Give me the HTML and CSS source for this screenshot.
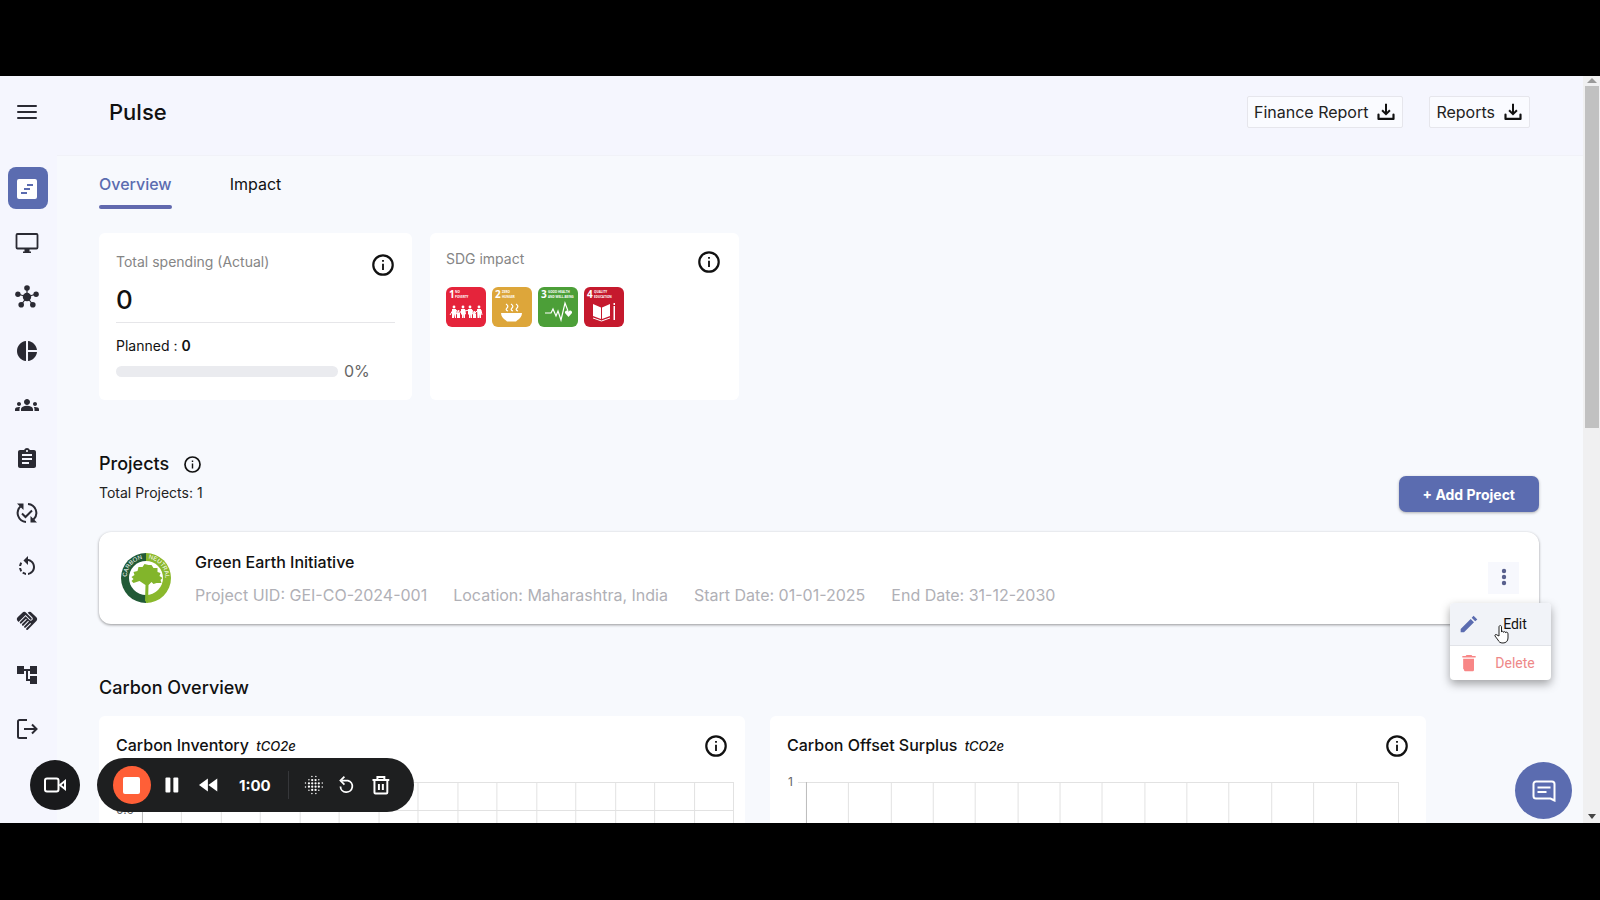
FILE: index.html
```html
<!DOCTYPE html>
<html lang="en">
<head>
    <meta charset="UTF-8">
    <meta name="viewport" content="width=device-width, initial-scale=1.0">
    <title>Pulse</title>
    <link rel="stylesheet" href="styles.css">
</head>
<body>

    <!-- shared icons -->
    <svg class="sprite" aria-hidden="true">
        <symbol id="icon-info" viewBox="0 0 24 24">
            <circle cx="12" cy="12" r="10.6" fill="none" stroke="currentColor" stroke-width="2.4"/>
            <path d="M11 10.5h2v7h-2zM11 6.5h2v2h-2z" fill="currentColor"/>
        </symbol>
        <symbol id="icon-download" viewBox="0 0 24 24">
            <path d="M21 15v5.300H3V15" fill="none" stroke="currentColor" stroke-width="2.6" stroke-linejoin="round" stroke-linecap="round"/>
            <path d="M12 2v12M7.300 10l4.700 4.600 4.700-4.600" fill="none" stroke="currentColor" stroke-width="2.4"/>
        </symbol>
    </svg>

    <div class="screen">
        <nav class="sidebar">
            <button class="menu-toggle" aria-label="Menu">
                <svg viewBox="0 0 20 16"><path d="M1 2h18M1 8h18M1 14h18" stroke="currentColor" stroke-width="2" stroke-linecap="round"/></svg>
            </button>
            <a href="#" class="nav-item active" aria-label="Pulse">
                <svg viewBox="0 0 24 24"><rect x="2" y="2" width="20" height="20" rx="2" fill="#fff"/><path d="M12 8h6M9 12h6M6 16h6" stroke="#5b6cb0" stroke-width="2"/></svg>
            </a>
            <a href="#" class="nav-item" aria-label="Monitor">
                <svg viewBox="0 0 24 24"><rect x="1.500" y="3" width="21" height="14.500" rx="1" fill="none" stroke="currentColor" stroke-width="1.800"/><path d="M9.500 17.500h5v3h1.500V22H8v-1.500h1.500z" fill="currentColor"/></svg>
            </a>
            <a href="#" class="nav-item" aria-label="Network">
                <svg viewBox="0 0 24 24" fill="currentColor"><path d="M12 12V3M12 12L3 9M12 12l9-3M12 12l-6 8M12 12l6 8" stroke="currentColor" stroke-width="1.200"/><circle cx="12" cy="12" r="4.200"/><circle cx="12" cy="3" r="2.800"/><circle cx="2.900" cy="9.200" r="2.700"/><circle cx="21.100" cy="9.200" r="2.700"/><circle cx="6.200" cy="19.800" r="2.800"/><circle cx="17.800" cy="19.800" r="2.800"/></svg>
            </a>
            <a href="#" class="nav-item" aria-label="Charts">
                <svg viewBox="0 0 24 24" fill="currentColor"><path d="M11 2v20c-5.070-.5-9-4.790-9-10s3.930-9.500 9-10zm2.030 0v8.990H22c-.47-4.740-4.240-8.520-8.970-8.990zm0 11.010V22c4.740-.47 8.500-4.250 8.970-8.990h-8.970z"/></svg>
            </a>
            <a href="#" class="nav-item" aria-label="Groups">
                <svg viewBox="0 0 24 24" fill="currentColor"><path d="M12 12.750c1.630 0 3.070.39 4.240.9 1.080.48 1.760 1.560 1.760 2.730V18H6v-1.610c0-1.180.68-2.260 1.760-2.730 1.170-.52 2.610-.91 4.240-.91zM4 13c1.100 0 2-.9 2-2s-.9-2-2-2-2 .9-2 2 .9 2 2 2zm1.130 1.100c-.37-.06-.74-.1-1.130-.1-.99 0-1.930.21-2.780.58A2.010 2.010 0 0 0 0 16.430V18h4.500v-1.610c0-.83.23-1.610.63-2.290zM20 13c1.100 0 2-.9 2-2s-.9-2-2-2-2 .9-2 2 .9 2 2 2zm4 3.430c0-.81-.48-1.530-1.220-1.850A6.950 6.950 0 0 0 20 14c-.39 0-.76.04-1.130.1.4.68.63 1.460.63 2.290V18H24v-1.570zM12 6c1.660 0 3 1.340 3 3s-1.340 3-3 3-3-1.340-3-3 1.340-3 3-3z"/></svg>
            </a>
            <a href="#" class="nav-item" aria-label="Assignments">
                <svg viewBox="0 0 24 24" fill="currentColor"><path d="M19 3h-4.180C14.400 1.840 13.300 1 12 1c-1.300 0-2.400.84-2.820 2H5c-1.100 0-2 .9-2 2v14c0 1.100.9 2 2 2h14c1.100 0 2-.9 2-2V5c0-1.100-.9-2-2-2zm-7 0c.55 0 1 .45 1 1s-.45 1-1 1-1-.45-1-1 .45-1 1-1zm2 14H7v-2h7v2zm3-4H7v-2h10v2zm0-4H7V7h10v2z"/></svg>
            </a>
            <a href="#" class="nav-item" aria-label="Changes">
                <svg viewBox="0 0 24 24" fill="none" stroke="currentColor" stroke-width="2"><path d="M11 21A9 9 0 0 1 5.500 5.500M13 3a9 9 0 0 1 5.500 15.500"/><path d="M7 12.500l3.500 3.500 6.500-6.500"/><path d="M2 2.500h6.500V9zM22 21.500h-6.500V15z" fill="currentColor" stroke="none"/></svg>
            </a>
            <a href="#" class="nav-item" aria-label="History">
                <svg viewBox="0 0 24 24" fill="currentColor"><path d="M7.110 8.530L5.700 7.110C4.800 8.270 4.240 9.610 4.070 11h2.020c.14-.87.49-1.720 1.020-2.470zM6.090 13H4.070c.17 1.390.72 2.730 1.620 3.890l1.410-1.420c-.52-.75-.87-1.590-1.010-2.470zm1.010 5.320c1.160.9 2.510 1.440 3.900 1.610V17.900c-.87-.15-1.710-.49-2.460-1.030L7.100 18.320zM13 4.070V1L8.450 5.550 13 10V6.090c2.840.48 5 2.940 5 5.910s-2.160 5.430-5 5.910v2.020c3.950-.49 7-3.850 7-7.930s-3.050-7.440-7-7.930z"/></svg>
            </a>
            <a href="#" class="nav-item" aria-label="Partners">
                <svg viewBox="0 0 24 24" fill="currentColor"><path d="M16.480 10.410c-.39.39-1.040.39-1.430 0l-4.470-4.460-7.050 7.040-.66-.63a3 3 0 0 1 0-4.240l4.240-4.240a3 3 0 0 1 4.240 0L16.480 9c.39.39.39 1.020 0 1.410zm.7-2.120c.78.78.78 2.050 0 2.830-1.270 1.270-2.610.22-2.830 0l-3.760-3.760-5.570 5.570c-.39.39-.39 1.020 0 1.410s1.020.39 1.420 0l4.620-4.620.71.71-4.620 4.620c-.39.39-.39 1.020 0 1.410s1.020.39 1.420 0l4.620-4.620.71.71-4.620 4.620c-.39.39-.39 1.020 0 1.410s1.020.39 1.410 0l4.620-4.620.71.71-4.620 4.620c-.39.39-.39 1.020 0 1.410s1.020.39 1.410 0l8.320-8.340a3 3 0 0 0 0-4.240l-4.240-4.240a3 3 0 0 0-4.180-.06l4.470 4.470z"/></svg>
            </a>
            <a href="#" class="nav-item" aria-label="Structure">
                <svg viewBox="0 0 24 24" fill="currentColor"><path d="M22 11V3h-7v3H9V3H2v8h7V8h2v10h4v3h7v-8h-7v3h-2V8h2v3z"/></svg>
            </a>
            <a href="#" class="nav-item" aria-label="Log out">
                <svg viewBox="0 0 24 24" fill="none" stroke="currentColor" stroke-width="2"><path d="M12 3H4.500A1.500 1.500 0 0 0 3 4.500v15A1.500 1.500 0 0 0 4.500 21H12M9 12h12M17 7.500l4.500 4.500-4.500 4.500"/></svg>
            </a>
        </nav>

        <div class="page">
            <header class="topbar">
                <h1>Pulse</h1>
                <div class="topbar-actions">
                    <button class="report-btn">Finance Report <svg><use href="#icon-download"/></svg></button>
                    <button class="report-btn">Reports <svg><use href="#icon-download"/></svg></button>
                </div>
            </header>

            <main class="content">
                <div class="tabs">
                    <a href="#" class="tab selected">Overview</a>
                    <a href="#" class="tab">Impact</a>
                </div>

                <div class="stats">
                    <section class="card spending">
                        <div class="card-head">
                            <span class="card-label">Total spending (Actual)</span>
                            <svg class="info"><use href="#icon-info"/></svg>
                        </div>
                        <div class="amount">0</div>
                        <div class="planned">Planned : <b>0</b></div>
                        <div class="progress-row">
                            <div class="progress"></div>
                            <span>0%</span>
                        </div>
                    </section>

                    <section class="card sdg">
                        <div class="card-head">
                            <span class="card-label">SDG impact</span>
                            <svg class="info"><use href="#icon-info"/></svg>
                        </div>
                        <div class="goals">
                            <svg viewBox="0 0 40 40" fill="#fff">
                                <rect width="40" height="40" rx="6" fill="#e5243b"/>
                                <text x="3" y="11" class="goal-num">1</text>
                                <text x="9" y="6" class="goal-text">NO</text><text x="9" y="11" class="goal-text">POVERTY</text>
                                <circle cx="8" cy="20" r="1.400"/><circle cx="17" cy="20" r="1.400"/><circle cx="24" cy="20" r="1.400"/><circle cx="33" cy="20" r="1.400"/>
                                <circle cx="12.500" cy="24" r="1"/><circle cx="28.500" cy="25" r="1"/>
                                <path d="M6 22h4l1 5-1 .5V31H9v-4l-1 4H6zM15 22h4l1 5-1 .5V31h-1.500v-4L17 31h-1v-3l-1-1zM22 22h4l1 5-1 .5V31h-1.500v-4L24 31h-1v-3l-1-1zM31 22h4v9h-1.500v-4L33 31h-1.500zM11 25.500h3V31h-3zM27 26.500h3V31h-3z"/>
                                <path d="M4 28l3-5M10 23l3 4 3-4M19 24l4-1M26 23l2 4 4-4M35 23l1 5" stroke="#fff" stroke-width="1" fill="none"/>
                            </svg>
                            <svg viewBox="0 0 40 40" fill="#fff">
                                <rect width="40" height="40" rx="6" fill="#dda63a"/>
                                <text x="3" y="11" class="goal-num">2</text>
                                <text x="10" y="6" class="goal-text">ZERO</text><text x="10" y="11" class="goal-text">HUNGER</text>
                                <path d="M9 26h21c0 3-2 6-5 7.500l-1 1h-9l-1-1C11 32 9 29 9 26z"/>
                                <path d="M14 17q3 2 1 4t1 3M19 17q3 2 1 4t1 3M24 17q3 2 1 4t1 3" fill="none" stroke="#fff" stroke-width="1.200"/>
                            </svg>
                            <svg viewBox="0 0 40 40" fill="#fff">
                                <rect width="40" height="40" rx="6" fill="#4c9f38"/>
                                <text x="3" y="11" class="goal-num">3</text>
                                <text x="10" y="6" class="goal-text">GOOD HEALTH</text><text x="10" y="11" class="goal-text">AND WELL-BEING</text>
                                <path d="M7 26h6l2-4 3 7 2-5 3 9 4-17 3 8" fill="none" stroke="#fff" stroke-width="1.200"/>
                                <path d="M30.500 30l-3.500-4c-.5-2 2-3.500 3.500-1.500 1.500-2 4-.5 3.500 1.500z"/>
                            </svg>
                            <svg viewBox="0 0 40 40" fill="#fff">
                                <rect width="40" height="40" rx="6" fill="#c5192d"/>
                                <text x="3" y="11" class="goal-num">4</text>
                                <text x="10" y="6" class="goal-text">QUALITY</text><text x="10" y="11" class="goal-text">EDUCATION</text>
                                <path d="M9 17l8 3.500V32l-8-3zM18 20.500l8-3.500v12l-8 3z"/>
                                <path d="M9 31l8.500 3 8.500-3" fill="none" stroke="#fff" stroke-width="1"/>
                                <path d="M29.500 19h1.500v14h-1.500zM29.500 16h1.500v2h-1.500z"/>
                            </svg>
                        </div>
                    </section>
                </div>

                <div class="projects-head">
                    <div>
                        <h2>Projects <svg class="info-small"><use href="#icon-info"/></svg></h2>
                        <p>Total Projects: 1</p>
                    </div>
                    <button class="add-btn">+ Add Project</button>
                </div>

                <article class="project">
                    <svg class="project-logo" viewBox="0 0 50 50">
                        <path d="M25 0a25 25 0 0 0 0 50z" fill="#215a36"/>
                        <path d="M25 0a25 25 0 0 1 0 50z" fill="#8ab82c"/>
                        <circle cx="25" cy="25" r="17" fill="#fff"/>
                        <path d="M24 48l.5-16-6-4-6 2-2-2 2-2-2-2 3-2-1-3 4-1 1-4 4 0 2-3 4 1 3 0 2 3 4 0 0 4 3 1-1 3 3 2-2 2 1 3-5 0-3 1-2-2-3 3-.5 18z" fill="#82b52b"/>
                        <path id="logo-arc" d="M5.500 25a19.500 19.500 0 0 1 39 0" fill="none"/>
                        <text class="logo-text"><textPath href="#logo-arc" startOffset="1">CARBON</textPath></text>
                        <text class="logo-text"><textPath href="#logo-arc" startOffset="33">NEUTRAL</textPath></text>
                    </svg>
                    <div class="project-info">
                        <h3>Green Earth Initiative</h3>
                        <div class="project-meta">
                            <span>Project UID: GEI-CO-2024-001</span>
                            <span>Location: Maharashtra, India</span>
                            <span>Start Date: 01-01-2025</span>
                            <span>End Date: 31-12-2030</span>
                        </div>
                    </div>
                    <button class="more-btn" aria-label="More">
                        <svg viewBox="0 0 6 20" fill="currentColor"><circle cx="3" cy="4" r="2.200"/><circle cx="3" cy="10" r="2.200"/><circle cx="3" cy="16" r="2.200"/></svg>
                    </button>
                    <div class="menu">
                        <button class="menu-edit">
                            <svg viewBox="0 0 24 24" fill="#5b6cb0"><path d="M2 18v4h4L18 10l-4-4zM22 6.500L17.500 2l-2.300 2.600 4.200 4.200z"/></svg>
                            <span>Edit</span>
                        </button>
                        <button class="menu-delete">
                            <svg viewBox="0 0 24 24" fill="#f88686"><path d="M6 20c0 1.100.9 2 2 2h8c1.100 0 2-.9 2-2V7H5v12zM20 3.500h-4l-1-1H9l-1 1H4v2h16z"/></svg>
                            <span>Delete</span>
                        </button>
                        <svg class="pointer" viewBox="0 0 16 20"><path d="M5 12V3c0-2 2.500-2 2.500 0v5c0-1 2-1 2 .3 0-1 2.200-1 2.200.5 0-1 2.300-1 2.300 1V14c0 3-2 5-5 5-3 0-4-1-5-3l-3-4c-.5-1.500 1-2 2-1z" fill="#fff" stroke="#222" stroke-width="1"/></svg>
                    </div>
                </article>

                <h2 class="carbon-title">Carbon Overview</h2>
                <div class="charts">
                    <section class="card chart">
                        <div class="card-head">
                            <h3>Carbon Inventory <em>tCO2e</em></h3>
                            <svg class="info"><use href="#icon-info"/></svg>
                        </div>
                        <div class="plot plot-left">
                            <svg viewBox="0 0 619 60" preserveAspectRatio="none" stroke="#e2e2e2">
                                <path d="M18 .5h601M18 28.500h601"/>
                                <path d="M65.500 0v60M105.500 0v60M144.500 0v60M184.500 0v60M223.500 0v60M263.500 0v60M302.500 0v60M342.500 0v60M381.500 0v60M421.500 0v60M460.500 0v60M500.500 0v60M539.500 0v60M579.500 0v60M618.500 0v60"/>
                                <path d="M26.500 0v60" stroke="#bbb"/>
                            </svg>
                            <span class="tick tick-mid">0.9</span>
                        </div>
                    </section>
                    <section class="card chart">
                        <div class="card-head">
                            <h3>Carbon Offset Surplus <em>tCO2e</em></h3>
                            <svg class="info"><use href="#icon-info"/></svg>
                        </div>
                        <div class="plot plot-right">
                            <svg viewBox="0 0 613 60" preserveAspectRatio="none" stroke="#e2e2e2">
                                <path d="M11 .5h602"/>
                                <path d="M61.500 0v60M104.500 0v60M146.500 0v60M188.500 0v60M231.500 0v60M273.500 0v60M315.500 0v60M358.500 0v60M400.500 0v60M442.500 0v60M485.500 0v60M527.500 0v60M570.500 0v60M612.500 0v60"/>
                                <path d="M19.500 0v60" stroke="#bbb"/>
                            </svg>
                            <span class="tick tick-top">1</span>
                        </div>
                    </section>
                </div>
            </main>
        </div>

        <div class="scrollbar">
            <svg viewBox="0 0 10 6"><path d="M0 6l5-5 5 5z" fill="#9a9a9a"/></svg>
            <div class="thumb"></div>
            <svg viewBox="0 0 10 6"><path d="M1 0h8L5 5z" fill="#444"/></svg>
        </div>

        <!-- recorder controls -->
        <div class="recorder">
            <button class="camera" aria-label="Camera">
                <svg viewBox="0 0 24 20" fill="none" stroke="#fff" stroke-width="2"><rect x="2" y="3.500" width="13.500" height="13" rx="2"/><path d="M17 10l5-4v8z"/></svg>
            </button>
            <div class="recorder-bar">
                <button class="stop" aria-label="Stop"><i></i></button>
                <button class="rec-btn pause" aria-label="Pause"><svg viewBox="0 0 20 20" fill="#fff"><rect x="3.500" y="2.500" width="5" height="15" rx="1"/><rect x="11.500" y="2.500" width="5" height="15" rx="1"/></svg></button>
                <button class="rec-btn rewind" aria-label="Rewind"><svg viewBox="0 0 20 20" fill="#fff"><path d="M10 3.500v13L1 10zM19.500 3.500v13L10.500 10z"/></svg></button>
                <span class="time">1:00</span>
                <span class="divider"></span>
                <button class="rec-btn" aria-label="Effects"><svg viewBox="0 0 20 20" fill="none" stroke="#fff" stroke-linecap="round"><path d="M8 1.500v0M12 1.500v0M8 18.500v0M12 18.500v0M1.500 8v0M1.500 12v0M18.500 8v0M18.500 12v0M5 4.800v0M15 4.800v0M5 15.200v0M15 15.200v0" stroke-width="1.500"/><path d="M8.300 5v0M11.700 5v0M5 8.300v0M8.300 8.300v0M11.700 8.300v0M15 8.300v0M5 11.700v0M8.300 11.700v0M11.700 11.700v0M15 11.700v0M8.300 15v0M11.700 15v0" stroke-width="2.300"/></svg></button>
                <button class="rec-btn" aria-label="Restart"><svg viewBox="0 0 20 20" fill="none" stroke="#fff" stroke-width="1.800"><path d="M5 5.500h6a6 6 0 1 1-7.500 6"/><path d="M7.500 1.500l-4 4 4 4"/></svg></button>
                <button class="rec-btn" aria-label="Discard"><svg viewBox="0 0 20 20" fill="none" stroke="#fff" stroke-width="2"><path d="M1.500 5h17M6.500 5V2h7v3M3.500 5v12.500c0 .6.400 1 1 1h11c.6 0 1-.4 1-1V5M8 9v6M12 9v6"/></svg></button>
            </div>
        </div>

        <button class="chat" aria-label="Chat">
            <svg viewBox="0 0 24 24" fill="none" stroke="#fff" stroke-width="2"><path d="M22.500 21.500l-4-2H4a2.500 2.500 0 0 1-2.500-2.500V5A2.500 2.500 0 0 1 4 2.500h16A2.500 2.500 0 0 1 22.500 5z"/><path d="M5.500 8.500h13M5.500 13h9"/></svg>
        </button>
    </div>

</body>
</html>
```
FILE: styles.css
```css
* {
    box-sizing: border-box;
}
body {
    margin: 0;
    height: 100vh;
    padding: 76px 0 77px;
    background-color: #000;
    font-family: "Inter", "Liberation Sans", sans-serif;
    color: #111;
    overflow: hidden;
}
h1, h2, h3, p {
    margin: 0;
    font-weight: 500;
}
button {
    font-family: inherit;
    border: none;
    padding: 0;
    cursor: pointer;
}
a {
    color: inherit;
    text-decoration: none;
}
.sprite {
    display: none;
}
.screen {
    position: relative;
    display: flex;
    height: 100%;
    overflow: hidden;
    background-color: #f7f9fd;
}

/* sidebar */
.sidebar {
    width: 57px;
    flex: none;
    display: flex;
    flex-direction: column;
    gap: 12px;
    padding: 20px 9px 0 8px;
    background-color: #f5f6fe;
    color: #2a2a33;
}
.menu-toggle {
    height: 32px;
    margin-bottom: 27px;
    padding-right: 2px;
    background: none;
    color: inherit;
}
.menu-toggle svg {
    width: 20px;
    height: 16px;
    display: block;
    margin: 0 auto;
}
.nav-item {
    flex: none;
    height: 42px;
    padding: 1px 2px 0 0;
    display: flex;
    align-items: center;
    justify-content: center;
    border-radius: 8px;
}
.nav-item svg {
    width: 24px;
    height: 24px;
}
.nav-item.active {
    background-color: #5b6cb0;
}

/* top bar */
.page {
    flex: 1;
    min-width: 0;
}
.topbar {
    display: flex;
    align-items: center;
    justify-content: space-between;
    height: 80px;
    padding: 0 53px 8px 52px;
    background-color: #f5f6fe;
    border-bottom: 1px solid #f1f2f8;
}
.topbar h1 {
    font-size: 22px;
    line-height: 28px;
}
.topbar-actions {
    display: flex;
    gap: 26px;
}
.report-btn {
    display: flex;
    align-items: center;
    gap: 8px;
    height: 32px;
    padding: 0 6px;
    border: 1px solid #e6e6ec;
    border-radius: 2px;
    background-color: #fafbff;
    color: #222;
    font-size: 16px;
}
.report-btn svg {
    width: 20px;
    height: 20px;
    color: #111;
}

/* content */
.content {
    padding: 16px 44px 0 42px;
}
.tabs {
    display: flex;
    gap: 58px;
}
.tab {
    font-size: 16px;
    line-height: 24px;
    padding-bottom: 9px;
    position: relative;
    border-bottom: 4px solid transparent;
}
.tab.selected {
    color: #5b6cb0;
    font-weight: 500;
}
.tab.selected::after {
    content: "";
    position: absolute;
    left: 0;
    right: 0;
    bottom: -4px;
    height: 4px;
    border-radius: 2px;
    background-color: #6169ae;
}
.card {
    background-color: #fff;
    border-radius: 6px;
}
.card-head {
    display: flex;
    justify-content: space-between;
    align-items: flex-start;
}
.card-label {
    font-size: 14px;
    line-height: 20px;
    color: #858585;
}
.info {
    width: 22px;
    height: 22px;
}
.stats {
    display: flex;
    gap: 18px;
    margin-top: 24px;
    height: 167px;
}
.spending {
    width: 313px;
    padding: 19px 17px 0;
}
.spending .card-head {
    height: 32px;
    padding-right: 1px;
}
.spending .info {
    margin-top: 2px;
}
.amount {
    font-size: 26px;
    line-height: 32px;
    height: 39px;
    font-weight: 500;
    border-bottom: 1px solid #e6e6e9;
}
.planned {
    margin-top: 13px;
    font-size: 14px;
    line-height: 20px;
}
.planned b {
    font-weight: 600;
}
.progress-row {
    display: flex;
    align-items: center;
    gap: 6px;
    margin-top: 4px;
    font-size: 16px;
    line-height: 22px;
    color: #666;
}
.progress {
    width: 222px;
    height: 11px;
    border-radius: 6px;
    background-color: #eaebef;
}
.sdg {
    width: 309px;
    padding: 16px 19px 0 16px;
}
.sdg .info {
    margin-top: 2px;
}
.goals {
    display: flex;
    gap: 6px;
    margin-top: 14px;
}
.goals svg {
    width: 40px;
    height: 40px;
}
.goal-num {
    font: bold 10px "Open Sans", sans-serif;
}
.goal-text {
    font: bold 3px "Open Sans", sans-serif;
}

/* projects */
.projects-head {
    display: flex;
    justify-content: space-between;
    align-items: flex-end;
    height: 62px;
    margin-top: 50px;
}
.projects-head > div {
    height: 62px;
}
h2 {
    display: flex;
    align-items: center;
    gap: 15px;
    font-size: 18px;
    line-height: 28px;
}
.info-small {
    width: 17px;
    height: 17px;
}
.projects-head p {
    margin-top: 5px;
    font-size: 14px;
    line-height: 20px;
    font-weight: 400;
    color: #222;
}
.add-btn {
    height: 36px;
    padding: 0 24px;
    border-radius: 7px;
    background-color: #5b6cb0;
    box-shadow: 0 1px 3px rgba(0, 0, 0, 0.3);
    color: #fff;
    font-size: 14px;
    font-weight: 700;
}
.project {
    position: relative;
    display: flex;
    align-items: center;
    height: 92px;
    margin-top: 20px;
    padding: 0 20px;
    border-radius: 12px;
    background-color: #fff;
    box-shadow: 0 1px 3px rgba(0, 0, 0, 0.4);
}
.project-logo {
    width: 50px;
    height: 50px;
    margin: 0 24px 0 2px;
}
.logo-text {
    font: 6px "Liberation Sans", sans-serif;
    fill: #fff;
}
.project-info {
    flex: 1;
}
.project-info h3,
.chart h3 {
    font-size: 16px;
    line-height: 24px;
}
.project-meta {
    display: flex;
    gap: 26px;
    margin-top: 9px;
    font-size: 16px;
    line-height: 24px;
    color: #b0b0b6;
}
.more-btn {
    width: 31px;
    height: 32px;
    background-color: #f7f8fd;
    color: #59608d;
}
.more-btn svg {
    width: 6px;
    height: 20px;
}
.menu {
    position: absolute;
    top: 71px;
    right: -12px;
    z-index: 2;
    width: 101px;
    border-radius: 4px;
    background-color: #fff;
    box-shadow: 0 4px 10px rgba(0, 0, 0, 0.35);
}
.menu button {
    display: flex;
    align-items: center;
    width: 100%;
    padding: 0 8px 0 9px;
    background: none;
    font-family: "Roboto", sans-serif;
    font-size: 14px;
}
.menu svg {
    width: 20px;
    height: 20px;
}
.menu span {
    flex: 1;
    text-align: center;
    padding-left: 8px;
}
.menu .menu-edit {
    height: 43px;
    border-bottom: 1px solid #e1e3e8;
    border-radius: 4px 4px 0 0;
    background-color: #f1f3f8;
    color: #111;
}
.menu .menu-delete {
    height: 34px;
    color: #ee8888;
}
.menu .pointer {
    position: absolute;
    left: 44px;
    top: 21px;
    width: 16px;
}

/* charts */
.carbon-title {
    margin-top: 50px;
}
.charts {
    display: grid;
    grid-template-columns: 646fr 656fr;
    gap: 25px;
    margin-top: 14px;
    padding-right: 113px;
}
.chart {
    height: 300px;
    padding: 17px 11px 0 17px;
}
.chart + .chart {
    padding-right: 27px;
}
.chart .card-head {
    padding-right: 7px;
    height: 49px;
}
.chart .info {
    margin-top: 2px;
}
.chart + .chart .card-head {
    padding-right: 0;
    margin-right: -9px;
}
.chart em {
    margin-left: 3px;
    font-size: 13px;
}
.plot {
    position: relative;
}
.plot svg {
    display: block;
    width: 100%;
    height: 60px;
}
.tick {
    position: absolute;
    left: 0;
    font-size: 12px;
    line-height: 16px;
    color: #666;
}
.tick-top {
    top: -8px;
    left: 1px;
}
.tick-mid {
    top: 20px;
}

/* page scrollbar */
.scrollbar {
    width: 17px;
    flex: none;
    display: flex;
    flex-direction: column;
    align-items: center;
    background-color: #f0f0f1;
}
.scrollbar svg {
    width: 10px;
    height: 6px;
    margin: 1px 0 3px;
}
.thumb {
    width: 14px;
    height: 342px;
    margin-bottom: auto;
    background-color: #c1c1c1;
}

/* recorder */
.recorder {
    position: absolute;
    left: 30px;
    bottom: 11px;
    display: flex;
    align-items: center;
    gap: 17px;
}
.camera {
    width: 50px;
    height: 50px;
    border-radius: 50%;
    background-color: #191a1c;
}
.camera svg {
    width: 24px;
    height: 20px;
    display: block;
    margin: 0 auto;
}
.recorder-bar {
    display: flex;
    align-items: center;
    width: 317px;
    height: 54px;
    padding: 0 23px 0 16px;
    border-radius: 27px;
    background-color: #1e1f20;
}
.stop {
    display: flex;
    align-items: center;
    justify-content: center;
    width: 38px;
    height: 38px;
    border-radius: 50%;
    background-color: #ff5f37;
}
.stop i {
    width: 17px;
    height: 17px;
    border-radius: 2px;
    background-color: #fff;
}
.rec-btn {
    width: 20px;
    height: 20px;
    background: none;
}
.rec-btn svg {
    display: block;
    width: 100%;
    height: 100%;
}
.pause {
    margin-left: 11px;
}
.rewind {
    margin: 0 19px 0 17px;
}
.time {
    width: 36px;
    font-size: 15px;
    font-weight: 700;
    text-align: center;
    color: #fff;
}
.divider {
    width: 1px;
    height: 28px;
    margin: 0 1px 0 15px;
    background-color: #36373a;
}
.divider ~ .rec-btn {
    margin-left: 14px;
}

.chat {
    position: absolute;
    right: 28px;
    bottom: 4px;
    width: 57px;
    height: 57px;
    border-radius: 50%;
    background-color: #5b6cb0;
}
.chat svg {
    width: 24px;
    height: 24px;
    display: block;
    margin: 0 auto;
}
```
